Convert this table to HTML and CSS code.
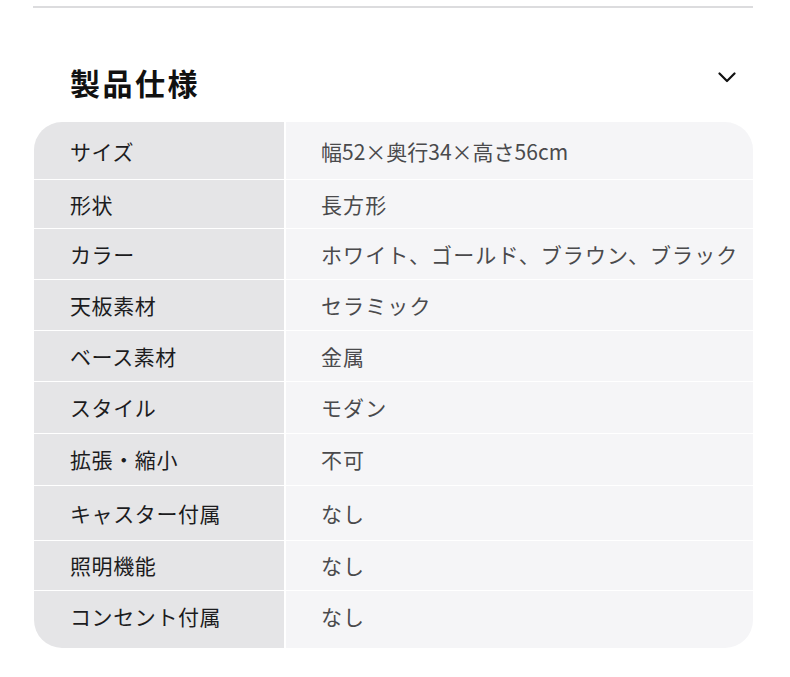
FILE: index.html
```html
<!DOCTYPE html>
<html lang="ja">
<head>
<meta charset="utf-8">
<link rel="stylesheet" href="styles.css">
</head>
<body>
<div class="page">
  <div class="rule"></div>
  <div class="head">
    <h2 class="title">製品仕様</h2>
    <span class="chev">
      <svg width="18" height="11" viewBox="0 0 18 11"><path d="M1.5 1.5 L9 9 L16.5 1.5" fill="none" stroke="#111" stroke-width="2.2" stroke-linecap="round" stroke-linejoin="round"/></svg>
    </span>
  </div>
  <div class="spec">
    <div class="k">サイズ</div><div class="v dim">幅52×奥行34×高さ56cm</div>
    <div class="k">形状</div><div class="v">長方形</div>
    <div class="k">カラー</div><div class="v">ホワイト、ゴールド、ブラウン、ブラック</div>
    <div class="k">天板素材</div><div class="v">セラミック</div>
    <div class="k">ベース素材</div><div class="v">金属</div>
    <div class="k">スタイル</div><div class="v">モダン</div>
    <div class="k">拡張・縮小</div><div class="v">不可</div>
    <div class="k">キャスター付属</div><div class="v">なし</div>
    <div class="k">照明機能</div><div class="v">なし</div>
    <div class="k">コンセント付属</div><div class="v">なし</div>
  </div>
</div>
</body>
</html>
```
FILE: styles.css
```css
html, body {
  margin: 0;
  padding: 0;
  background: #ffffff;
  font-family: "Noto Sans CJK JP", "Noto Sans", sans-serif;
}
.page {
  margin-left: 33px;
  width: 720px;
}
.rule {
  margin-top: 6px;
  height: 2px;
  background: #dcdcde;
}
.head {
  display: flex;
  justify-content: space-between;
  align-items: center;
  margin-top: 54px;
  height: 40px;
  margin-bottom: 20px;
}
.title {
  margin: 0 0 0 37px;
  font-size: 30px;
  line-height: 40px;
  font-weight: 700;
  letter-spacing: 2.5px;
  color: #111;
}
.chev {
  display: flex;
  margin-right: 17px;
  padding-bottom: 10px;
}
.spec {
  margin-left: 1px;
  display: grid;
  grid-template-columns: 250px 1fr;
  grid-template-rows: 57px 48px 50px 50px 50px 51px 51px 54px 49px 57px;
  column-gap: 2px;
  row-gap: 1px;
  background: #ffffff;
  border-radius: 28px;
  overflow: hidden;
}
.k, .v {
  display: flex;
  align-items: center;
  font-size: 21px;
  line-height: 1;
}
.k {
  background: #e5e5e7;
  color: #1c1c1e;
  padding-left: 36px;
  letter-spacing: 0.6px;
}
.v {
  background: #f5f5f7;
  color: #4a4a4c;
  padding-left: 35px;
  letter-spacing: 1.1px;
}
.v.dim {
  letter-spacing: 0;
}
.spec .k:first-child,
.spec .k:first-child + .v {
  padding-top: 2px;
}
.spec .k:nth-last-child(2),
.spec .v:last-child {
  padding-bottom: 6px;
}
```
